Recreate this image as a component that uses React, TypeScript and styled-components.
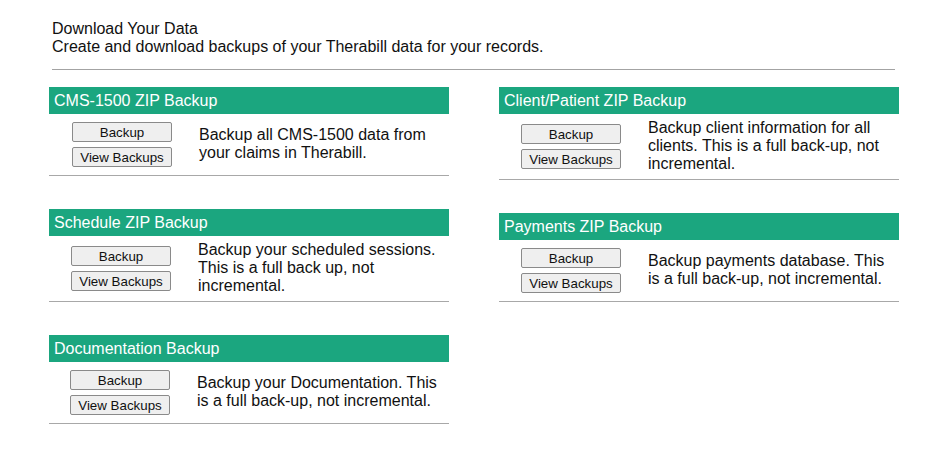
import React from 'react';
import styled, { createGlobalStyle } from 'styled-components';

const GlobalStyle = createGlobalStyle`
    html, body {
        margin: 0;
        padding: 0;
        background: #ffffff;
    }
    body {
        font-family: "Liberation Sans", Arial, sans-serif;
        color: #111111;
    }
`;

const Page = styled.div`
    width: 850px;
    padding: 20px 0 0 49px;
`;

const Intro = styled.div`
    padding-left: 3px;
    font-size: 16px;
    line-height: 18px;
`;

const Divider = styled.div`
    width: 843px;
    margin: 13px 0 0 3px;
    border-top: 1px solid #a3a3a3;
`;

const Columns = styled.div`
    display: grid;
    grid-template-columns: 400px 400px;
    column-gap: 50px;
    margin-top: 17px;
`;

const Column = styled.div`
    display: flex;
    flex-direction: column;
    gap: 33px;
`;

const Section = styled.section`
    border-bottom: 1px solid #a8a8a8;
`;

const SectionHeader = styled.div`
    height: 27px;
    line-height: 27px;
    padding-left: 5px;
    background-color: #1ba67f;
    color: #ffffff;
    font-size: 16px;
`;

const Row = styled.div<{ $indent: number }>`
    display: flex;
    align-items: center;
    padding: 5px 0 6px ${(p) => p.$indent}px;
`;

const ButtonStack = styled.div`
    display: flex;
    flex-direction: column;
    gap: 5px;
    padding: 3px 0 2px;
`;

const Button = styled.button`
    width: 100px;
    height: 20px;
    padding: 0;
    background-color: #efefef;
    border: 1px solid #8a8a8a;
    border-radius: 2px;
    font-family: "Liberation Sans", Arial, sans-serif;
    font-size: 13.33px;
    color: #111111;
    cursor: pointer;
`;

const Description = styled.div`
    flex: 1;
    margin-left: 27px;
    padding-right: 4px;
    font-size: 16px;
    line-height: 18px;
`;

type Backup = { title: string; text: string; indent: number };

const leftColumn: Backup[] = [
    { title: 'CMS-1500 ZIP Backup', text: 'Backup all CMS-1500 data from your claims in Therabill.', indent: 23 },
    { title: 'Schedule ZIP Backup', text: 'Backup your scheduled sessions. This is a full back up, not incremental.', indent: 22 },
    { title: 'Documentation Backup', text: 'Backup your Documentation. This is a full back-up, not incremental.', indent: 21 },
];

const rightColumn: Backup[] = [
    { title: 'Client/Patient ZIP Backup', text: 'Backup client information for all clients. This is a full back-up, not incremental.', indent: 22 },
    { title: 'Payments ZIP Backup', text: 'Backup payments database. This is a full back-up, not incremental.', indent: 22 },
];

const BackupSection: React.FC<{ item: Backup }> = ({ item }) => (
    <Section>
        <SectionHeader>{item.title}</SectionHeader>
        <Row $indent={item.indent}>
            <ButtonStack>
                <Button>Backup</Button>
                <Button>View Backups</Button>
            </ButtonStack>
            <Description>{item.text}</Description>
        </Row>
    </Section>
);

const App: React.FC = () => {
    return (
        <>
            <GlobalStyle />
            <Page>
                <Intro>
                    <div>Download Your Data</div>
                    <div>Create and download backups of your Therabill data for your records.</div>
                </Intro>
                <Divider />
                <Columns>
                    <Column>
                        {leftColumn.map((item) => (
                            <BackupSection key={item.title} item={item} />
                        ))}
                    </Column>
                    <Column>
                        {rightColumn.map((item) => (
                            <BackupSection key={item.title} item={item} />
                        ))}
                    </Column>
                </Columns>
            </Page>
        </>
    );
};

export default App;
